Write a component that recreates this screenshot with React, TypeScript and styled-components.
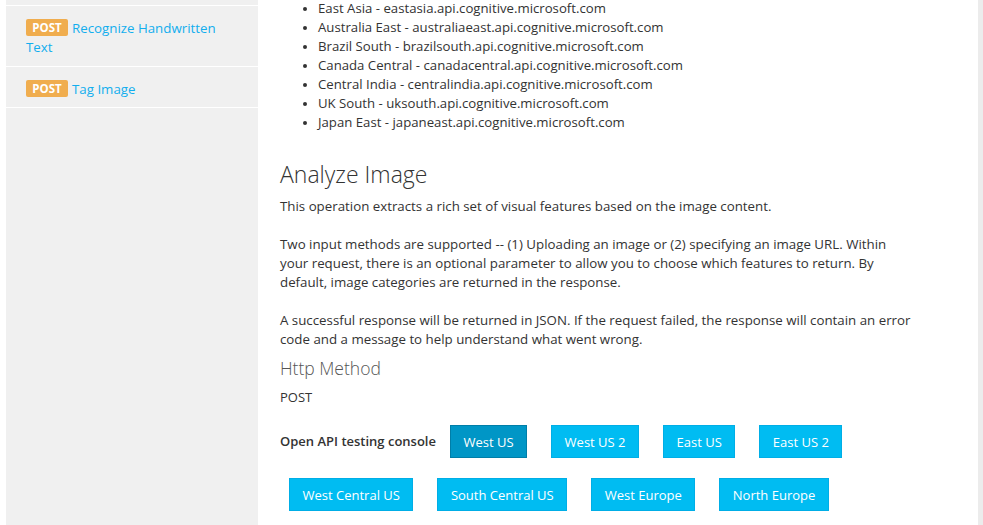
import React from "react";
import styled, { createGlobalStyle } from "styled-components";

const Global = createGlobalStyle`
  html, body { margin: 0; padding: 0; background: #ffffff; }
  body { font-family: "Open Sans", "Noto Sans", sans-serif; color: #333333; overflow: hidden; }
  * { box-sizing: border-box; }
`;

const Page = styled.div`
  display: flex;
  height: 525px;
  padding-left: 6px;
  overflow: hidden;
`;

const Sidebar = styled.nav`
  width: 252px;
  flex: none;
  background: #f0f0f0;
  display: flex;
  flex-direction: column;
  padding-top: 5px;
`;

const NavItem = styled.div`
  border-top: 1px solid #ffffff;
  padding: 13px 20px 9px 20px;
  font-size: 13.3px;
  line-height: 19px;
  &:last-child { border-bottom: 1px solid #ffffff; padding-bottom: 8px; }
`;

const Badge = styled.span`
  display: inline-block;
  background: #f0ad4e;
  color: #ffffff;
  font-weight: 700;
  font-size: 11.5px;
  line-height: 17px;
  height: 17px;
  width: 42px;
  text-align: center;
  border-radius: 2px;
  margin-right: 4px;
  vertical-align: 1px;
`;

const NavLink = styled.a`
  color: #12aeee;
  text-decoration: none;
`;

const Main = styled.main`
  flex: 1;
  padding: 0 22px;
  font-size: 13.3px;
  line-height: 19px;
`;

const Content = styled.div`
  width: 640px;
`;

const EndpointList = styled.ul`
  margin: -1px 0 0 0;
  padding-left: 38px;
  font-size: 13.2px;
  li::marker { font-size: 11px; }
`;

const Title = styled.h2`
  font-weight: 300;
  font-size: 23px;
  line-height: 30px;
  margin: 27px 0 8px 0;
  color: #333333;
`;

const Para = styled.p`
  margin: 0 0 19px 0;
  &:last-of-type { margin-bottom: 0; }
`;

const SubTitle = styled.h3`
  font-weight: 300;
  font-size: 17.5px;
  line-height: 24px;
  color: #555555;
  margin: 7px 0 0 0;
`;

const MethodText = styled.div`
  margin-top: 8px;
  font-size: 13px;
`;

const Console = styled.div`
  margin-top: 18px;
  display: flex;
  flex-wrap: wrap;
  align-items: center;
  row-gap: 20px;
`;

const ConsoleLabel = styled.span`
  font-weight: 600;
  font-size: 13px;
  margin-right: 5px;
`;

const RegionButton = styled.button<{ $active?: boolean }>`
  font-family: inherit;
  font-size: 13px;
  line-height: 20px;
  height: 33px;
  padding: 0 12.5px;
  margin: 0 15px 0 9px;
  color: #ffffff;
  background: ${(p) => (p.$active ? "#0096c6" : "#00bcf2")};
  border: 1px solid ${(p) => (p.$active ? "#007ea8" : "#00aee6")};
  border-radius: 0;
  cursor: pointer;
`;

const RightRail = styled.aside`
  width: 5px;
  flex: none;
  background: #ececec;
`;

const endpoints = [
  ["East Asia", "eastasia"],
  ["Australia East", "australiaeast"],
  ["Brazil South", "brazilsouth"],
  ["Canada Central", "canadacentral"],
  ["Central India", "centralindia"],
  ["UK South", "uksouth"],
  ["Japan East", "japaneast"],
];

const regions = [
  "West US",
  "West US 2",
  "East US",
  "East US 2",
  "West Central US",
  "South Central US",
  "West Europe",
  "North Europe",
];

export default function App() {
  return (
    <>
      <Global />
      <Page>
        <Sidebar>
          <NavItem>
            <Badge>POST</Badge>
            <NavLink href="#">Recognize Handwritten Text</NavLink>
          </NavItem>
          <NavItem>
            <Badge>POST</Badge>
            <NavLink href="#">Tag Image</NavLink>
          </NavItem>
        </Sidebar>
        <Main>
          <Content>
            <EndpointList>
              {endpoints.map(([name, host]) => (
                <li key={host}>
                  {name} - {host}.api.cognitive.microsoft.com
                </li>
              ))}
            </EndpointList>
            <Title>Analyze Image</Title>
            <Para>This operation extracts a rich set of visual features based on the image content.</Para>
            <Para>
              Two input methods are supported -- (1) Uploading an image or (2) specifying an image URL. Within
              <br />
              your request, there is an optional parameter to allow you to choose which features to return. By
              <br />
              default, image categories are returned in the response.
            </Para>
            <Para>
              A successful response will be returned in JSON. If the request failed, the response will contain an error
              <br />
              code and a message to help understand what went wrong.
            </Para>
            <SubTitle>Http Method</SubTitle>
            <MethodText>POST</MethodText>
          </Content>
          <Console>
            <ConsoleLabel>Open API testing console</ConsoleLabel>
            {regions.map((r, i) => (
              <RegionButton key={r} $active={i === 0}>
                {r}
              </RegionButton>
            ))}
          </Console>
        </Main>
        <RightRail />
      </Page>
    </>
  );
}
